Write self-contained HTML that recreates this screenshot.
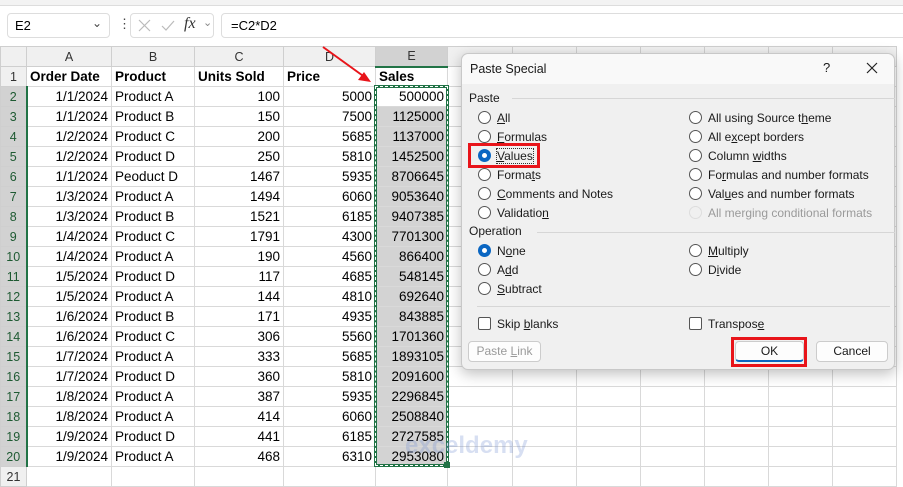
<!DOCTYPE html>
<html><head><meta charset="utf-8"><style>
*{box-sizing:border-box;margin:0;padding:0}
body{width:903px;height:482px;overflow:hidden;background:#fff;font-family:"Liberation Sans",Arial,sans-serif;position:relative;font-size:13px;color:#000}
.abs{position:absolute}
table{position:absolute;left:0;top:46px;border-collapse:collapse;table-layout:fixed}
td{height:20px;border:1px solid #d9d9d9;padding:0 3px;white-space:nowrap;overflow:hidden;font-size:13.5px;line-height:18px}
td.h{background:#f0f0f0;color:#333;text-align:center;font-size:12.5px;border-color:#cfcfcf}
td.rh{background:#f0f0f0;color:#333;text-align:center;font-size:12.5px;border-color:#cfcfcf;padding:0}
td.sel{background:#d2d2d2;color:#1e5a32;border-right:2px solid #217346}
td.r{text-align:right}
td.e{background:#d3d3d3;text-align:right}
td.b{font-weight:bold}
.dlg{position:absolute;left:461px;top:53px;width:434px;height:317px;background:#f0f0f0;border:1px solid #c8c8c8;border-radius:7px;box-shadow:0 4px 14px rgba(0,0,0,.25);font-size:12px;color:#1a1a1a}
.tb{position:absolute;left:0;top:0;width:100%;height:30px;background:#f9f9f9;border-radius:7px 7px 0 0}
.rad{position:absolute;width:13px;height:13px;border:1px solid #555;border-radius:50%;background:#fff}
.lbl{position:absolute;white-space:nowrap}
.chk{position:absolute;width:13px;height:13px;border:1px solid #555;border-radius:2px;background:#fff}
.btn{position:absolute;height:21px;border:1px solid #ccc;border-radius:4px;background:#fdfdfd;text-align:center;line-height:19px}
</style></head><body>
<div class="abs" style="left:0;top:0;width:903px;height:6px;background:#f3f3f3;border-bottom:1px solid #ddd"></div>
<div class="abs" style="left:7px;top:13px;width:103px;height:25px;border:1px solid #ddd;border-radius:4px"></div>
<div class="abs" style="left:15px;top:18px;font-size:13px">E2</div>
<div class="abs" style="left:92px;top:16px;font-size:12px;color:#444">⌄</div>
<div class="abs" style="left:118px;top:16px;font-size:13px;color:#444">⋮</div>
<div class="abs" style="left:130px;top:13px;width:84px;height:25px;border:1px solid #ddd;border-radius:4px"></div>
<svg class="abs" style="left:138px;top:19px" width="50" height="14"><path d="M1 1L12 12M12 1L1 12" stroke="#bbb" stroke-width="1.2"/><path d="M24 7L28 11L36 2" stroke="#bbb" stroke-width="1.2" fill="none"/></svg>
<div class="abs" style="left:184px;top:15px;font-family:'Liberation Serif',serif;font-style:italic;font-size:16px;color:#333">fx</div>
<div class="abs" style="left:203px;top:16px;font-size:11px;color:#888">⌄</div>
<div class="abs" style="left:221px;top:13px;width:690px;height:25px;border:1px solid #ddd;border-radius:4px"></div>
<div class="abs" style="left:231px;top:18px;font-size:13px">=C2*D2</div>

<table>
<colgroup><col style="width:26px"><col style="width:85px"><col style="width:83px"><col style="width:89px"><col style="width:92px"><col style="width:72px"><col style="width:65px"><col style="width:64px"><col style="width:64px"><col style="width:64px"><col style="width:64px"><col style="width:64px"><col style="width:64px"></colgroup>
<tr><td class="h"></td><td class="h">A</td><td class="h">B</td><td class="h">C</td><td class="h">D</td><td class="h" style="background:#d2d2d2;border-bottom:2px solid #217346">E</td><td class="h"></td><td class="h"></td><td class="h"></td><td class="h"></td><td class="h"></td><td class="h"></td><td class="h"></td></tr>
<tr><td class="rh">1</td><td class="b">Order Date</td><td class="b">Product</td><td class="b">Units Sold</td><td class="b">Price</td><td class="b">Sales</td><td></td><td></td><td></td><td></td><td></td><td></td><td></td></tr>
<tr><td class="rh sel">2</td><td class="r">1/1/2024</td><td>Product A</td><td class="r">100</td><td class="r">5000</td><td class="r">500000</td><td></td><td></td><td></td><td></td><td></td><td></td><td></td></tr>
<tr><td class="rh sel">3</td><td class="r">1/1/2024</td><td>Product B</td><td class="r">150</td><td class="r">7500</td><td class="e">1125000</td><td></td><td></td><td></td><td></td><td></td><td></td><td></td></tr>
<tr><td class="rh sel">4</td><td class="r">1/2/2024</td><td>Product C</td><td class="r">200</td><td class="r">5685</td><td class="e">1137000</td><td></td><td></td><td></td><td></td><td></td><td></td><td></td></tr>
<tr><td class="rh sel">5</td><td class="r">1/2/2024</td><td>Product D</td><td class="r">250</td><td class="r">5810</td><td class="e">1452500</td><td></td><td></td><td></td><td></td><td></td><td></td><td></td></tr>
<tr><td class="rh sel">6</td><td class="r">1/1/2024</td><td>Peoduct D</td><td class="r">1467</td><td class="r">5935</td><td class="e">8706645</td><td></td><td></td><td></td><td></td><td></td><td></td><td></td></tr>
<tr><td class="rh sel">7</td><td class="r">1/3/2024</td><td>Product A</td><td class="r">1494</td><td class="r">6060</td><td class="e">9053640</td><td></td><td></td><td></td><td></td><td></td><td></td><td></td></tr>
<tr><td class="rh sel">8</td><td class="r">1/3/2024</td><td>Product B</td><td class="r">1521</td><td class="r">6185</td><td class="e">9407385</td><td></td><td></td><td></td><td></td><td></td><td></td><td></td></tr>
<tr><td class="rh sel">9</td><td class="r">1/4/2024</td><td>Product C</td><td class="r">1791</td><td class="r">4300</td><td class="e">7701300</td><td></td><td></td><td></td><td></td><td></td><td></td><td></td></tr>
<tr><td class="rh sel">10</td><td class="r">1/4/2024</td><td>Product A</td><td class="r">190</td><td class="r">4560</td><td class="e">866400</td><td></td><td></td><td></td><td></td><td></td><td></td><td></td></tr>
<tr><td class="rh sel">11</td><td class="r">1/5/2024</td><td>Product D</td><td class="r">117</td><td class="r">4685</td><td class="e">548145</td><td></td><td></td><td></td><td></td><td></td><td></td><td></td></tr>
<tr><td class="rh sel">12</td><td class="r">1/5/2024</td><td>Product A</td><td class="r">144</td><td class="r">4810</td><td class="e">692640</td><td></td><td></td><td></td><td></td><td></td><td></td><td></td></tr>
<tr><td class="rh sel">13</td><td class="r">1/6/2024</td><td>Product B</td><td class="r">171</td><td class="r">4935</td><td class="e">843885</td><td></td><td></td><td></td><td></td><td></td><td></td><td></td></tr>
<tr><td class="rh sel">14</td><td class="r">1/6/2024</td><td>Product C</td><td class="r">306</td><td class="r">5560</td><td class="e">1701360</td><td></td><td></td><td></td><td></td><td></td><td></td><td></td></tr>
<tr><td class="rh sel">15</td><td class="r">1/7/2024</td><td>Product A</td><td class="r">333</td><td class="r">5685</td><td class="e">1893105</td><td></td><td></td><td></td><td></td><td></td><td></td><td></td></tr>
<tr><td class="rh sel">16</td><td class="r">1/7/2024</td><td>Product D</td><td class="r">360</td><td class="r">5810</td><td class="e">2091600</td><td></td><td></td><td></td><td></td><td></td><td></td><td></td></tr>
<tr><td class="rh sel">17</td><td class="r">1/8/2024</td><td>Product A</td><td class="r">387</td><td class="r">5935</td><td class="e">2296845</td><td></td><td></td><td></td><td></td><td></td><td></td><td></td></tr>
<tr><td class="rh sel">18</td><td class="r">1/8/2024</td><td>Product A</td><td class="r">414</td><td class="r">6060</td><td class="e">2508840</td><td></td><td></td><td></td><td></td><td></td><td></td><td></td></tr>
<tr><td class="rh sel">19</td><td class="r">1/9/2024</td><td>Product D</td><td class="r">441</td><td class="r">6185</td><td class="e">2727585</td><td></td><td></td><td></td><td></td><td></td><td></td><td></td></tr>
<tr><td class="rh sel">20</td><td class="r">1/9/2024</td><td>Product A</td><td class="r">468</td><td class="r">6310</td><td class="e">2953080</td><td></td><td></td><td></td><td></td><td></td><td></td><td></td></tr>
<tr><td class="rh">21</td><td></td><td></td><td></td><td></td><td></td><td></td><td></td><td></td><td></td><td></td><td></td><td></td></tr>
</table>
<div class="abs" style="left:374px;top:85px;width:75px;height:382px;border:3px solid #217346"></div>
<div class="abs" style="left:375px;top:86px;width:73px;height:380px;border:1px dashed #fff"></div>
<div class="abs" style="left:444px;top:462px;width:6px;height:6px;background:#217346"></div>
<div class="abs" style="left:405px;top:432px;font-size:24px;color:rgba(110,140,210,.28);font-weight:bold">exceldemy</div>
<svg class="abs" style="left:0;top:0" width="400" height="100"><line x1="323" y1="47" x2="366" y2="78" stroke="#e8141a" stroke-width="2"/><path d="M371 82L358 80L364 72Z" fill="#e8141a"/></svg>

<div class="dlg">
<div class="tb"></div>
<div class="lbl" style="left:8px;top:8px;font-size:12.5px">Paste Special</div>
<div class="lbl" style="left:361px;top:6px;font-size:13px">?</div>
<svg class="abs" style="left:404px;top:8px" width="12" height="12"><path d="M1 1L11 11M11 1L1 11" stroke="#222" stroke-width="1.2"/></svg>
<div class="lbl" style="left:7px;top:37px">Paste</div>
<div class="abs" style="left:50px;top:44px;width:383px;border-top:1px solid #d6d6d6"></div>
<div class="rad" style="left:16px;top:57px"></div><div class="lbl" style="left:35px;top:57px"><u>A</u>ll</div>
<div class="rad" style="left:16px;top:76px"></div><div class="lbl" style="left:35px;top:76px"><u>F</u>ormulas</div>
<div class="rad" style="left:16px;top:95px;border:4px solid #0a66c2"></div><div class="lbl" style="left:35px;top:95px;outline:1px dotted #333"><u>V</u>alues</div>
<div class="abs" style="left:6px;top:89px;width:72px;height:25px;border:3px solid #e8141a"></div>
<div class="rad" style="left:16px;top:114px"></div><div class="lbl" style="left:35px;top:114px">Forma<u>t</u>s</div>
<div class="rad" style="left:16px;top:133px"></div><div class="lbl" style="left:35px;top:133px"><u>C</u>omments and Notes</div>
<div class="rad" style="left:16px;top:152px"></div><div class="lbl" style="left:35px;top:152px">Validatio<u>n</u></div>
<div class="rad" style="left:227px;top:57px"></div><div class="lbl" style="left:246px;top:57px">All using Source t<u>h</u>eme</div>
<div class="rad" style="left:227px;top:76px"></div><div class="lbl" style="left:246px;top:76px">All e<u>x</u>cept borders</div>
<div class="rad" style="left:227px;top:95px"></div><div class="lbl" style="left:246px;top:95px">Column <u>w</u>idths</div>
<div class="rad" style="left:227px;top:114px"></div><div class="lbl" style="left:246px;top:114px">Fo<u>r</u>mulas and number formats</div>
<div class="rad" style="left:227px;top:133px"></div><div class="lbl" style="left:246px;top:133px">Val<u>u</u>es and number formats</div>
<div class="rad" style="left:227px;top:152px;border-color:#ddd;background:#f0f0f0"></div><div class="lbl" style="left:246px;top:152px;color:#9a9a9a">All merging conditional formats</div>
<div class="lbl" style="left:7px;top:170px">Operation</div>
<div class="abs" style="left:75px;top:178px;width:358px;border-top:1px solid #d6d6d6"></div>
<div class="rad" style="left:16px;top:190px;border:4px solid #0a66c2"></div><div class="lbl" style="left:35px;top:190px">N<u>o</u>ne</div>
<div class="rad" style="left:16px;top:209px"></div><div class="lbl" style="left:35px;top:209px">A<u>d</u>d</div>
<div class="rad" style="left:16px;top:228px"></div><div class="lbl" style="left:35px;top:228px"><u>S</u>ubtract</div>
<div class="rad" style="left:227px;top:190px"></div><div class="lbl" style="left:246px;top:190px"><u>M</u>ultiply</div>
<div class="rad" style="left:227px;top:209px"></div><div class="lbl" style="left:246px;top:209px">D<u>i</u>vide</div>
<div class="abs" style="left:15px;top:252px;width:413px;border-top:1px solid #d6d6d6"></div>
<div class="chk" style="left:16px;top:263px"></div><div class="lbl" style="left:35px;top:263px">Skip <u>b</u>lanks</div>
<div class="chk" style="left:227px;top:263px"></div><div class="lbl" style="left:246px;top:263px">Transpos<u>e</u></div>
<div class="btn" style="left:6px;top:287px;width:73px;color:#9a9a9a">Paste <u>L</u>ink</div>
<div class="btn" style="left:273px;top:287px;width:69px;border-bottom:2px solid #0a66c2">OK</div>
<div class="abs" style="left:269px;top:283px;width:76px;height:30px;border:3px solid #e8141a"></div>
<div class="btn" style="left:354px;top:287px;width:72px">Cancel</div>
</div>
</body></html>
